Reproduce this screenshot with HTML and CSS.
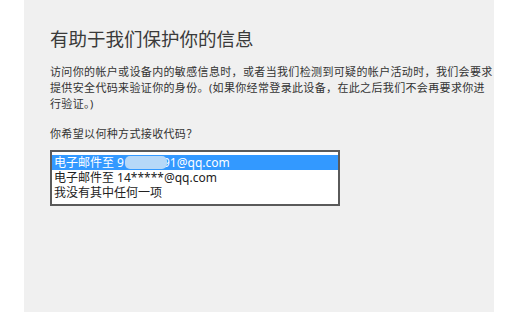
FILE: index.html
```html
<!DOCTYPE html>
<html lang="zh-CN">
<head>
<meta charset="utf-8">
<title>有助于我们保护你的信息</title>
<link rel="stylesheet" href="styles.css">
</head>
<body>
<main class="panel">
  <h1 class="title">有助于我们保护你的信息</h1>
  <p class="desc">访问你的帐户或设备内的敏感信息时，或者当我们检测到可疑的帐户活动时，我们会要求提供安全代码来验证你的身份。(如果你经常登录此设备，在此之后我们不会再要求你进行验证。)</p>
  <p class="question">你希望以何种方式接收代码？</p>
  <ul class="listbox">
    <li class="option selected">电子邮件至 9<span class="redact"></span>91@qq.com</li>
    <li class="option">电子邮件至 14*****@qq.com</li>
    <li class="option">我没有其中任何一项</li>
  </ul>
</main>
</body>
</html>
```
FILE: styles.css
```css
html, body {
  margin: 0;
  padding: 0;
  background: #ffffff;
}
body {
  font-family: "Noto Sans", "Noto Sans CJK SC", sans-serif;
  color: #333333;
}
.panel {
  box-sizing: border-box;
  margin-left: 24px;
  width: 470px;
  height: 312px;
  background: #f0f0f0;
  padding: 26px 0 0 26px;
  overflow: hidden;
}
.title {
  margin: 0;
  font-size: 18.5px;
  line-height: 24px;
  font-weight: normal;
  color: #3a3a3a;
  font-family: "Noto Sans CJK SC", sans-serif;
}
.desc {
  margin: 14px 0 0 0;
  width: 444px;
  font-size: 11px;
  letter-spacing: 0.35px;
  line-height: 16px;
  color: #333333;
}
.question {
  margin: 14px 0 0 0;
  font-size: 11px;
  letter-spacing: 0.35px;
  line-height: 16px;
  color: #333333;
}
.listbox {
  list-style: none;
  margin: 8px 0 0 0;
  padding: 3px 0 4px 0;
  width: 286px;
  border: 2px solid #5a5a5a;
  background: #ffffff;
}
.option {
  height: 15px;
  line-height: 15px;
  padding-left: 2px;
  font-size: 12px;
  color: #222222;
  white-space: nowrap;
}
.option.selected {
  background: #3399ff;
  color: #ffffff;
}
.redact {
  position: relative;
  z-index: 1;
  display: inline-block;
  width: 42px;
  height: 13px;
  margin: 0 -4px 0 1px;
  vertical-align: -2px;
  background: #b6d8f8;
  border-radius: 5px;
}
```
